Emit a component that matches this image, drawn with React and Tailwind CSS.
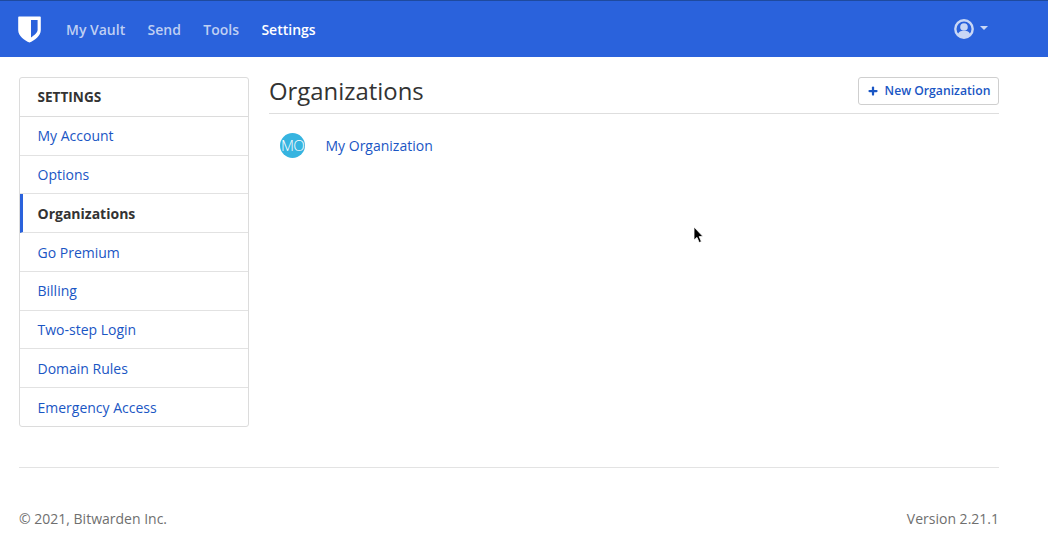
import { Plus } from 'lucide-react';

const NAV = [
  { label: 'My Vault' },
  { label: 'Send' },
  { label: 'Tools' },
  { label: 'Settings', active: true },
];

const MENU = ['My Account', 'Options', 'Organizations', 'Go Premium', 'Billing', 'Two-step Login', 'Domain Rules', 'Emergency Access'];

function Shield() {
  return (
    <svg width="23" height="27" viewBox="0 0 23 27" aria-hidden>
      <path
        fill="#fff"
        fillRule="evenodd"
        d="M1 0.4 H22 Q22.8 0.4 22.8 1.2 V14 C22.8 20 16.5 24.4 11.5 26.6 C6.5 24.4 0.2 20 0.2 14 V1.2 Q0.2 0.4 1 0.4 Z M13 4 V21.4 C16 19.6 19.6 17 19.6 13.8 V4 Z"
      />
    </svg>
  );
}

function UserCircle() {
  return (
    <svg width="20" height="20" viewBox="0 0 20 20" fill="none" aria-hidden>
      <circle cx="10" cy="10" r="8.7" stroke="#c9d7f5" strokeWidth="2.4" />
      <circle cx="10" cy="8" r="3.8" fill="#c9d7f5" />
      <path d="M3.6 16.2 C4.2 13.2 6.2 12 7.6 12 H12.4 C13.8 12 15.8 13.2 16.4 16.2 C14.6 18 12.4 18.8 10 18.8 C7.6 18.8 5.4 18 3.6 16.2 Z" fill="#c9d7f5" />
    </svg>
  );
}

function Cursor() {
  return (
    <svg className="absolute left-[693px] top-[226px]" width="12" height="19" viewBox="0 0 12 19" aria-hidden>
      <path d="M1 1 V14 L4 11.4 L6.2 16.6 L8.4 15.6 L6.2 10.6 H10 Z" fill="#000" stroke="#fff" strokeWidth="0.8" />
    </svg>
  );
}

export default function App() {
  return (
    <div className="relative flex h-[542px] w-[1048px] flex-col overflow-hidden bg-white font-['Open_Sans',sans-serif] text-[14px] text-[#333]">
      <nav className="flex h-[57px] shrink-0 items-center border-t border-t-[#1e4a9e] bg-[#2a62dc] pl-[18px] pr-[60px]">
        <Shield />
        <ul className="ml-[13.8px] flex items-center">
          {NAV.map((item) => (
            <li
              key={item.label}
              className={`px-[11.2px] text-[14px] font-semibold ${item.active ? 'text-white' : 'text-[#bfcff3]'}`}
            >
              {item.label}
            </li>
          ))}
        </ul>
        <div className="ml-auto flex items-center gap-[6px]">
          <UserCircle />
          <span className="mb-[2px] h-0 w-0 border-x-[4.5px] border-t-[4.5px] border-x-transparent border-t-[#c9d7f5]" />
        </div>
      </nav>

      <main className="flex flex-1 items-start gap-[20px] pl-[19px] pr-[49px] pt-[20px]">
        <aside className="w-[230px] shrink-0 overflow-hidden rounded-[3px] border border-[#dcdcdc]">
          <h2 className="flex h-[39px] items-center border-b border-[#dcdcdc] pl-[17.5px] text-[13.6px] font-bold text-[#333]">SETTINGS</h2>
          {MENU.map((item, i) => {
            const current = item === 'Organizations';
            const last = i === MENU.length - 1;
            return (
              <div
                key={item}
                className={`flex items-center text-[14px] ${last ? 'h-[37.96px]' : 'h-[38.72px] border-b border-[#e2e2e2]'} ${
                  current ? 'border-l-[3px] border-l-[#2a62dc] pl-[14.5px] font-bold text-[#333]' : 'pl-[17.5px] text-[#1a56c4]'
                }`}
              >
                {item}
              </div>
            );
          })}
        </aside>

        <section className="min-w-0 flex-1">
          <header className="flex h-[37px] items-start justify-between border-b border-[#dedede]">
            <h1 className="text-[23.9px] leading-[28px] font-normal text-[#333]">Organizations</h1>
            <button className="flex h-[28px] w-[141px] items-center justify-center gap-[6px] rounded-[3px] border border-[#cfcfcf] bg-white text-[12.2px] font-semibold text-[#1a56c4]">
              <Plus size={12} strokeWidth={4.5} />
              New Organization
            </button>
          </header>
          <div className="mt-[19px] flex items-center pl-[11px]">
            <span className="flex h-[25px] w-[25px] items-center justify-center rounded-full bg-[#36b4e0] text-[15px] font-light tracking-[-0.8px] text-white">MO</span>
            <span className="ml-[20.5px] text-[14px] text-[#1a56c4]">My Organization</span>
          </div>
        </section>
      </main>

      <footer className="mx-[19px] mr-[49px] flex h-[75px] shrink-0 items-end justify-between border-t border-[#e3e3e3] pb-[13px] text-[14px] text-[#6f6f6f]">
        <span>© 2021, Bitwarden Inc.</span>
        <span>Version 2.21.1</span>
      </footer>

      <Cursor />
    </div>
  );
}
